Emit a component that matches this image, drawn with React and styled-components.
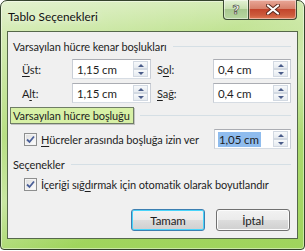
import React from "react"
import styled, { createGlobalStyle } from "styled-components"

const Global = createGlobalStyle`
  html, body {
    margin: 0;
    padding: 0;
    background: #ffffff;
  }
  body {
    font-family: Lato, "Noto Sans", sans-serif;
    font-size: 11px;
    letter-spacing: -0.1px;
    color: #1e1e1e;
  }
`

const Window = styled.div`
  width: 305px;
  height: 250px;
  box-sizing: border-box;
  border: 1px solid #34432c;
  border-radius: 7px 7px 4px 4px;
  padding: 0 6px 10px 6px;
  display: flex;
  flex-direction: column;
  background:
    linear-gradient(155deg, rgba(255,255,255,0.5) 0%, rgba(255,255,255,0.15) 35%, rgba(255,255,255,0.4) 52%, rgba(255,255,255,0) 72%),
    linear-gradient(to bottom, #c8e6a0 0px, #b6de80 30px, #9fd45c 100%);
  box-shadow: inset 0 0 0 1px rgba(255,255,255,0.45);
`

const TitleBar = styled.div`
  height: 30px;
  display: flex;
  justify-content: space-between;
  align-items: flex-start;
`

const Title = styled.div`
  padding: 8px 0 0 1px;
  font-size: 11.8px;
  letter-spacing: 0;
  color: #101010;
  text-shadow: 0 0 6px rgba(255,255,255,0.9);
`

const Caption = styled.div`
  display: flex;
  margin-top: -1px;
  margin-right: 1px;
`

const CapButton = styled.div`
  width: ${p => p.$w}px;
  height: 20px;
  box-sizing: border-box;
  border: 1px solid #3d4b35;
  border-top: none;
  border-left: ${p => (p.$first ? "1px solid #3d4b35" : "none")};
  border-radius: ${p => (p.$first ? "0 0 0 4px" : "0 0 4px 0")};
  display: flex;
  align-items: center;
  justify-content: center;
  background: ${p =>
    p.$red
      ? "linear-gradient(to bottom, #e9a798 0%, #d7826c 45%, #c3452c 50%, #cc5a3c 80%, #e07a55 100%)"
      : "linear-gradient(to bottom, #e4f2d6 0%, #c8e0b0 45%, #a8c890 50%, #b8d6a0 100%)"};
  box-shadow: inset 0 0 0 1px rgba(255,255,255,0.45);
`

const HelpGlyph = styled.span`
  font-family: "DejaVu Sans", sans-serif;
  font-weight: bold;
  font-size: 13px;
  line-height: 1;
  color: #f4f4f4;
  -webkit-text-stroke: 0.6px #3a4434;
`

const Panel = styled.div`
  flex: 1;
  background: #f0f0f0;
  border: 1px solid #55684a;
  padding: 6px 6px 0 5px;
  display: flex;
  flex-direction: column;
`

const GroupHeader = styled.div`
  height: 16px;
  display: flex;
  align-items: center;
  margin-top: ${p => p.$top || 0}px;
  white-space: nowrap;
  &::after {
    content: "";
    flex: 1;
    height: 1px;
    background: #d5dfe5;
    margin-left: 6px;
  }
`

const Highlight = styled.span`
  margin-left: -3px;
  padding: 0 3px 0 2px;
  height: 15px;
  line-height: 15px;
  background: #d7f0a6;
  border: 1px solid #6f7d66;
  box-shadow: 1px 1px 0 #c2c2c2;
`

const FieldGrid = styled.div`
  margin-top: 5px;
  padding-left: 9px;
  display: grid;
  grid-template-columns: 50px 85px 56px 78px;
  grid-auto-rows: 20px;
  row-gap: 4px;
  align-items: center;
`

const Label = styled.span`
  white-space: nowrap;
`

const Key = styled.span`
  text-decoration: underline;
  text-underline-offset: 2px;
`

const SpinBox = styled.div`
  width: ${p => p.$w}px;
  height: 20px;
  flex: none;
  margin-left: ${p => (p.$push ? "auto" : "0")};
  box-sizing: border-box;
  border: 1px solid #abadb3;
  border-color: #abadb3 #c9ced6 #d6dce3 #c9ced6;
  background: #ffffff;
  display: flex;
  align-items: center;
  padding: 1px 2px 1px 2px;
`

const SpinValue = styled.span`
  flex: 1;
  padding-left: 1px;
  font-size: 11.5px;
  span {
    background: ${p => (p.$selected ? "#8fbcee" : "transparent")};
    padding: 1px 2px 1px 1px;
  }
`

const Arrows = styled.div`
  width: 15px;
  height: 16px;
  display: flex;
  flex-direction: column;
`

const Arrow = styled.div`
  flex: 1;
  border: 1px solid #d2d9e2;
  background: linear-gradient(to bottom, #f7f9fb, #e6ebf0);
  display: flex;
  align-items: center;
  justify-content: center;
  &::before {
    content: "";
    border-left: 3px solid transparent;
    border-right: 3px solid transparent;
    ${p =>
      p.$down
        ? "border-top: 3px solid #4b5d8a;"
        : "border-bottom: 3px solid #4b5d8a;"}
  }
`

const CheckRow = styled.div`
  display: flex;
  align-items: center;
  height: ${p => p.$h || 16}px;
  margin-top: ${p => p.$top || 0}px;
  padding-left: 11px;
  white-space: nowrap;
`

const Box = styled.span`
  width: 13px;
  height: 13px;
  margin-right: 4px;
  box-sizing: border-box;
  border: 1px solid #8e8f8f;
  background: linear-gradient(135deg, #dcdcdc, #ffffff);
  display: flex;
  align-items: center;
  justify-content: center;
  flex: none;
  box-shadow: inset 0 0 0 1px #f4f4f4;
`

const Buttons = styled.div`
  display: flex;
  justify-content: flex-end;
  gap: 11px;
  margin-top: 17px;
  padding-right: 1px;
`

const Button = styled.div`
  width: 74px;
  height: 22px;
  box-sizing: border-box;
  border: 1px solid ${p => (p.$default ? "#3c7fb1" : "#707070")};
  border-radius: 3px;
  display: flex;
  align-items: center;
  justify-content: center;
  font-size: 11.5px;
  background: linear-gradient(to bottom, #f2f2f2 0%, #ebebeb 49%, #dddddd 50%, #cfcfcf 100%);
  box-shadow: inset 0 0 0 1px ${p => (p.$default ? "#48d4fa" : "#fcfcfc")};
`

const Check = () => (
  <Box>
    <svg width="9" height="9" viewBox="0 0 9 9">
      <path d="M1 4.5 L3.5 7 L8 1.5" fill="none" stroke="#4a5f98" strokeWidth="1.8" />
    </svg>
  </Box>
)

const Spin = ({ value, w, selected, push }) => (
  <SpinBox $w={w} $push={push}>
    <SpinValue $selected={selected}>
      <span>{value}</span>
    </SpinValue>
    <Arrows>
      <Arrow />
      <Arrow $down />
    </Arrows>
  </SpinBox>
)

const CloseIcon = () => (
  <svg width="14" height="11" viewBox="0 0 14 11">
    <path d="M2 1.5 L12 9.5 M12 1.5 L2 9.5" stroke="#5a2a1e" strokeWidth="4" strokeLinecap="round" />
    <path d="M2 1.5 L12 9.5 M12 1.5 L2 9.5" stroke="#ffffff" strokeWidth="2.2" strokeLinecap="round" />
  </svg>
)

export default function App() {
  return (
    <>
      <Global />
      <Window>
        <TitleBar>
          <Title>Tablo Seçenekleri</Title>
          <Caption>
            <CapButton $w={26} $first>
              <HelpGlyph>?</HelpGlyph>
            </CapButton>
            <CapButton $w={48} $red>
              <CloseIcon />
            </CapButton>
          </Caption>
        </TitleBar>
        <Panel>
          <GroupHeader>Varsayılan hücre kenar boşlukları</GroupHeader>
          <FieldGrid>
            <Label><Key>Ü</Key>st:</Label>
            <Spin value="1,15 cm" w={79} />
            <Label>S<Key>o</Key>l:</Label>
            <Spin value="0,4 cm" w={78} />
            <Label>A<Key>l</Key>t:</Label>
            <Spin value="1,15 cm" w={79} />
            <Label><Key>S</Key>ağ:</Label>
            <Spin value="0,4 cm" w={78} />
          </FieldGrid>
          <GroupHeader $top={4}>
            <Highlight>Varsayılan hücre boşluğu</Highlight>
          </GroupHeader>
          <CheckRow $h={20} $top={6}>
            <Check />
            <span><Key>H</Key>ücreler arasında boşluğa izin ver</span>
            <Spin value="1,05 cm" w={77} selected push />
          </CheckRow>
          <GroupHeader $top={7}>Seçenekler</GroupHeader>
          <CheckRow $top={4}>
            <Check />
            <span>İçeriği sığ<Key>d</Key>ırmak için otomatik olarak boyutlandır</span>
          </CheckRow>
          <Buttons>
            <Button $default>Tamam</Button>
            <Button>İptal</Button>
          </Buttons>
        </Panel>
      </Window>
    </>
  )
}
